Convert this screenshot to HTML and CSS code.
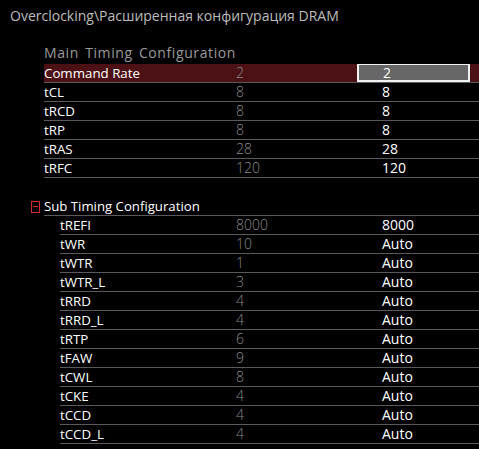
FILE: index.html
```html
<!DOCTYPE html>
<html lang="ru">
<head>
    <meta charset="UTF-8">
    <title>Расширенная конфигурация DRAM</title>
    <link rel="stylesheet" href="styles.css">
</head>
<body>
    <div class="path">Overclocking\Расширенная конфигурация DRAM</div>

    <div class="group">
        <div class="group-title">Main Timing Configuration</div>
        <div class="rows">
            <div class="row selected">
                <span class="name">Command Rate</span>
                <span class="default">2</span>
                <span class="current"><span class="box">2</span></span>
            </div>
            <div class="row"><span class="name">tCL</span><span class="default">8</span><span class="current">8</span></div>
            <div class="row"><span class="name">tRCD</span><span class="default">8</span><span class="current">8</span></div>
            <div class="row"><span class="name">tRP</span><span class="default">8</span><span class="current">8</span></div>
            <div class="row"><span class="name">tRAS</span><span class="default">28</span><span class="current">28</span></div>
            <div class="row"><span class="name">tRFC</span><span class="default">120</span><span class="current">120</span></div>
        </div>
    </div>

    <div class="sub">
        <div class="sub-title"><span class="toggle"></span>Sub Timing Configuration</div>
        <div class="rows sub-rows">
            <div class="row"><span class="name">tREFI</span><span class="default">8000</span><span class="current">8000</span></div>
            <div class="row"><span class="name">tWR</span><span class="default">10</span><span class="current">Auto</span></div>
            <div class="row"><span class="name">tWTR</span><span class="default">1</span><span class="current">Auto</span></div>
            <div class="row"><span class="name">tWTR_L</span><span class="default">3</span><span class="current">Auto</span></div>
            <div class="row"><span class="name">tRRD</span><span class="default">4</span><span class="current">Auto</span></div>
            <div class="row"><span class="name">tRRD_L</span><span class="default">4</span><span class="current">Auto</span></div>
            <div class="row"><span class="name">tRTP</span><span class="default">6</span><span class="current">Auto</span></div>
            <div class="row"><span class="name">tFAW</span><span class="default">9</span><span class="current">Auto</span></div>
            <div class="row"><span class="name">tCWL</span><span class="default">8</span><span class="current">Auto</span></div>
            <div class="row"><span class="name">tCKE</span><span class="default">4</span><span class="current">Auto</span></div>
            <div class="row"><span class="name">tCCD</span><span class="default">4</span><span class="current">Auto</span></div>
            <div class="row"><span class="name">tCCD_L</span><span class="default">4</span><span class="current">Auto</span></div>
        </div>
    </div>
</body>
</html>
```

FILE: styles.css
```css
body {
    margin: 0;
    background: #000;
    color: #fff;
    font-family: 'Open Sans', 'DejaVu Sans', sans-serif;
    font-size: 14px;
    overflow: hidden;
}

.path {
    padding: 6px 10px 0;
    line-height: 19px;
    color: #bdbdbd;
}

.group {
    margin: 18px 0 0 44px;
}

.group-title {
    line-height: 19px;
    color: #9a9a9a;
    letter-spacing: 0.6px;
    word-spacing: 2px;
}

.rows {
    margin-top: 2px;
}

.row {
    display: grid;
    grid-template-columns: 192px 121px 1fr;
    height: 18px;
    line-height: 18px;
    border-bottom: 1px solid #5a5a5a;
}

.row .name {
    font-size: 13.3px;
    font-weight: 500;
}

.row .default {
    color: #8a8a8a;
    font-weight: 300;
}

.row .current {
    padding-left: 25px;
}

.row.selected {
    background: #4c1114;
}

.row.selected .current {
    padding-left: 0;
}

.box {
    display: block;
    box-sizing: border-box;
    width: 113px;
    height: 18px;
    padding-left: 24px;
    line-height: 15px;
    background: #676767;
    border: 2px solid #f2f2f2;
    border-top-width: 1px;
}

.sub {
    margin: 19px 0 0 44px;
}

.sub-title {
    position: relative;
    line-height: 18px;
    font-size: 13.2px;
    border-bottom: 1px solid #5a5a5a;
}

.toggle {
    position: absolute;
    left: -13px;
    top: 4px;
    width: 7px;
    height: 10px;
    border: 1px solid #d42a2e;
}

.toggle::after {
    content: "";
    position: absolute;
    left: 1px;
    right: 1px;
    top: 4px;
    height: 1px;
    background: #d42a2e;
}

.sub-rows {
    margin: 0 0 0 16px;
}

.sub-rows .row {
    grid-template-columns: 176px 121px 1fr;
}
```
